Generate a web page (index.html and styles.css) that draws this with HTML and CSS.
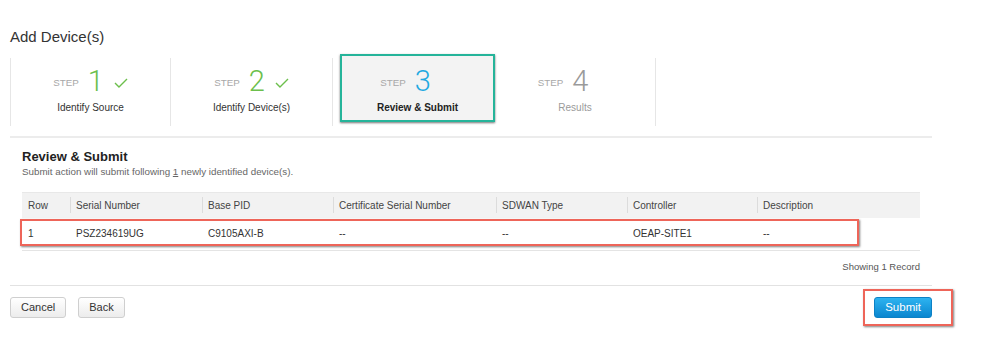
FILE: index.html
```html
<!DOCTYPE html>
<html lang="en">
<head>
<meta charset="utf-8">
<title>Add Device(s)</title>
<link rel="stylesheet" href="styles.css">
</head>
<body>
<div class="page">
  <h1 class="title">Add Device(s)</h1>

  <div class="steps">
    <div class="step first">
      <div class="step-top"><span class="step-word">STEP</span><span class="step-num done">1</span><svg class="check" viewBox="0 0 14 10" width="14" height="10"><polyline points="1,5 5,9 13,1" fill="none" stroke="#6cbf4c" stroke-width="1.4"/></svg></div>
      <div class="step-label">Identify Source</div>
    </div>
    <div class="step">
      <div class="step-top"><span class="step-word">STEP</span><span class="step-num done">2</span><svg class="check" viewBox="0 0 14 10" width="14" height="10"><polyline points="1,5 5,9 13,1" fill="none" stroke="#6cbf4c" stroke-width="1.4"/></svg></div>
      <div class="step-label">Identify Device(s)</div>
    </div>
    <div class="step current">
      <div class="step-box">
        <div class="step-top"><span class="step-word">STEP</span><span class="step-num active">3</span><span class="check-space"></span></div>
        <div class="step-label bold">Review &amp; Submit</div>
      </div>
    </div>
    <div class="step">
      <div class="step-top"><span class="step-word">STEP</span><span class="step-num todo">4</span><span class="check-space"></span></div>
      <div class="step-label muted">Results</div>
    </div>
  </div>

  <div class="review">
    <h2 class="review-title">Review &amp; Submit</h2>
    <p class="review-sub">Submit action will submit following <u>1</u> newly identified device(s).</p>

    <div class="table-wrap">
      <table class="grid">
        <colgroup>
          <col class="c-row"><col class="c-serial"><col class="c-pid"><col class="c-cert"><col class="c-sdwan"><col class="c-ctrl"><col class="c-desc">
        </colgroup>
        <thead>
          <tr>
            <th class="nosep">Row</th>
            <th>Serial Number</th>
            <th>Base PID</th>
            <th>Certificate Serial Number</th>
            <th>SDWAN Type</th>
            <th>Controller</th>
            <th>Description</th>
          </tr>
        </thead>
        <tbody>
          <tr>
            <td>1</td>
            <td>PSZ234619UG</td>
            <td>C9105AXI-B</td>
            <td>--</td>
            <td>--</td>
            <td>OEAP-SITE1</td>
            <td>--</td>
          </tr>
        </tbody>
      </table>
      <div class="mark-row"></div>
    </div>
    <div class="records">Showing 1 Record</div>
  </div>

  <div class="footer">
    <div class="left-btns">
      <button class="btn">Cancel</button>
      <button class="btn">Back</button>
    </div>
    <div class="submit-wrap">
      <button class="btn primary">Submit</button>
      <div class="mark-submit"></div>
    </div>
  </div>
</div>
</body>
</html>
```

FILE: styles.css
```css
* { box-sizing: border-box; }
html, body { margin: 0; padding: 0; background: #fff; }
body {
  font-family: "Liberation Sans", Arial, Helvetica, sans-serif;
  color: #333;
  min-height: 348px;
}
.page {
  width: 932px;
  padding-left: 10px;
  padding-bottom: 30px;
}
.title {
  margin: 0;
  padding-top: 28px;
  font-size: 15px;
  line-height: 18px;
  font-weight: normal;
  color: #333;
}

/* steps */
.steps {
  margin-top: 12px;
  display: grid;
  grid-template-columns: 161px 162px 162px 161px;
  padding-bottom: 10px;
  border-bottom: 2px solid #ececec;
}
.step {
  height: 68px;
  border-right: 1px solid #e6e6e6;
  display: flex;
  flex-direction: column;
  align-items: center;
  padding-top: 8px;
}
.step.first { border-left: 1px solid #e6e6e6; }
.step.current {
  padding-top: 0;
  border-right: none;
  align-items: stretch;
}
.step-box {
  margin: -4px 0 0 7px;
  height: 68px;
  border: 2px solid #25b49a;
  background: #f3f3f3;
  box-shadow: 0 1px 2px rgba(0,0,0,0.55);
  display: flex;
  flex-direction: column;
  align-items: center;
  padding-top: 10px;
}
.step-top {
  height: 30px;
  display: flex;
  align-items: center;
}
.step-word {
  font-size: 9.8px;
  color: #a8a8a8;
  margin-right: 9px;
  margin-top: 2px;
}
.step-num {
  font-family: Roboto, "Liberation Sans", sans-serif;
  font-weight: 300;
  font-size: 29px;
  line-height: 30px;
}
.step-num.done { color: #6cbf4c; }
.step-num.active { color: #1fa9e1; }
.step-num.todo { color: #9a9a9a; }
.check { margin-left: 10px; margin-top: 3px; }
.check-space { display: inline-block; width: 24px; height: 10px; }
.step-label {
  margin-top: 5px;
  font-size: 10px;
  line-height: 14px;
  color: #333;
}
.step-label.bold { font-weight: bold; color: #222; }
.step-label.muted { color: #9a9a9a; }

/* review */
.review { padding-left: 12px; padding-right: 12px; }
.review-title {
  margin: 11px 0 0;
  font-size: 13px;
  line-height: 16px;
  font-weight: bold;
  color: #222;
}
.review-sub {
  margin: 0;
  font-size: 9.8px;
  line-height: 13px;
  color: #666;
}
.table-wrap {
  position: relative;
  margin-top: 14px;
}
.grid {
  width: 898px;
  border-collapse: collapse;
  table-layout: fixed;
  font-size: 10px;
}
.c-row { width: 48px; }
.c-serial { width: 132px; }
.c-pid { width: 131px; }
.c-cert { width: 163px; }
.c-sdwan { width: 131px; }
.c-ctrl { width: 130px; }
.c-desc { width: 163px; }
.grid th {
  height: 25px;
  padding: 0 6px;
  text-align: left;
  font-weight: normal;
  color: #444;
  background: #f2f2f2 linear-gradient(#dcdcdc, #dcdcdc) no-repeat left center / 1px 16px;
  border-top: 1px solid #e8e8e8;
}
.grid th.nosep { background-image: none; }
.grid td {
  height: 33px;
  padding: 0 6px;
  color: #333;
  border-bottom: 1px solid #e4e4e4;
}
.mark-row {
  position: absolute;
  left: -2px;
  top: 27px;
  width: 839px;
  height: 27px;
  border: 2px solid #ee6559;
  box-shadow: 1px 1px 2px rgba(0,0,0,0.5);
  pointer-events: none;
}
.records {
  margin-top: 10px;
  font-size: 9.5px;
  line-height: 12px;
  text-align: right;
  color: #555;
}

/* footer */
.footer {
  margin-top: 12px;
  border-top: 1px solid #e2e2e2;
  padding-top: 11px;
  display: flex;
  justify-content: space-between;
  align-items: flex-start;
}
.left-btns { display: flex; gap: 12px; }
.btn {
  font-family: "Liberation Sans", Arial, sans-serif;
  font-size: 11px;
  height: 21px;
  padding: 0 10px;
  border: 1px solid #cfcfcf;
  border-radius: 3px;
  background: linear-gradient(#ffffff, #ececec);
  color: #333;
  line-height: 19px;
  cursor: pointer;
}
.btn.primary {
  font-size: 11.5px;
  padding: 0 10px;
  color: #fff;
  border-color: #0c81c5;
  background: linear-gradient(#2db3f0, #0a86cf);
}
.submit-wrap { position: relative; }
.mark-submit {
  position: absolute;
  left: -11px;
  top: -8px;
  width: 90px;
  height: 37px;
  border: 2px solid #ee6559;
  box-shadow: 1px 1px 2px rgba(0,0,0,0.5);
  pointer-events: none;
}
```
